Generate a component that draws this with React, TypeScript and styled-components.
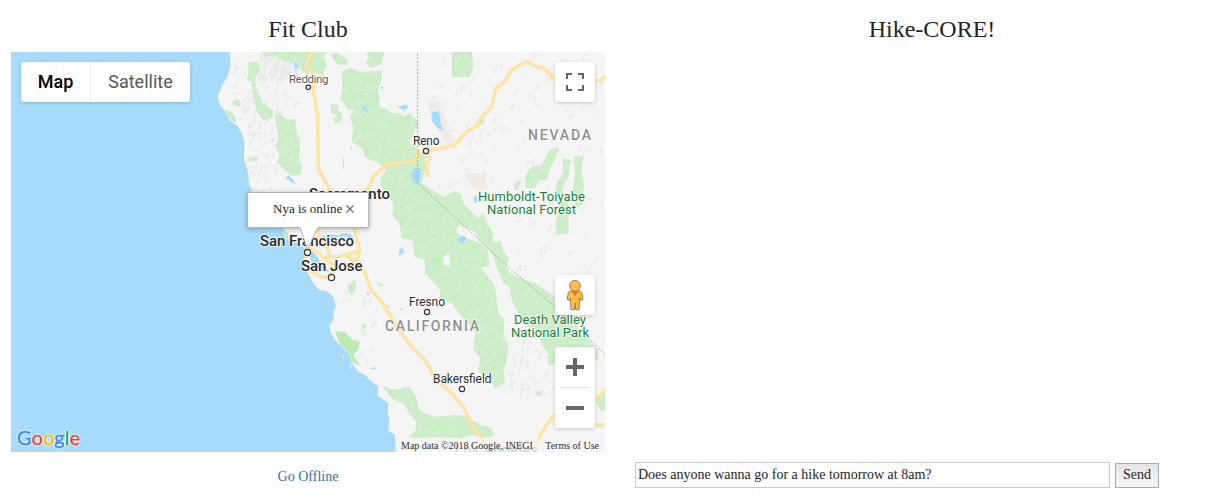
import React from 'react';
import styled, { createGlobalStyle } from 'styled-components';

const GlobalStyle = createGlobalStyle`
  * { box-sizing: border-box; }
  body {
    margin: 0;
    background: #fff;
    color: #212529;
    font-family: "Liberation Serif", "Times New Roman", serif;
    font-size: 14px;
    overflow: hidden;
  }
`;

const Page = styled.main`
  display: flex;
  gap: 30px;
  height: 502px;
  padding-left: 11px;
`;

const Column = styled.section`
  display: flex;
  flex-direction: column;
  width: 594px;
  flex: none;
`;

const Title = styled.h1`
  margin: 0;
  height: 52px;
  padding-top: 15px;
  font-size: 24px;
  line-height: 28px;
  font-weight: 400;
  text-align: center;
`;

const MapFrame = styled.div`
  position: relative;
  height: 400px;
  overflow: hidden;
  background: #a6dbfb;
  font-family: Roboto, Arial, sans-serif;
`;

const MapCanvas = styled.svg`
  display: block;
  width: 594px;
  height: 400px;
`;

const TypeSwitch = styled.div`
  position: absolute;
  top: 10px;
  left: 10px;
  display: flex;
  height: 40px;
  border-radius: 2px;
  background: #fff;
  box-shadow: 0 1px 4px -1px rgba(0, 0, 0, 0.3);
`;

const TypeButton = styled.button<{ $active?: boolean; $width: number }>`
  width: ${(p) => p.$width}px;
  padding: 0;
  border: 0;
  border-left: ${(p) => (p.$active ? '0' : '1px solid #ebebeb')};
  background: transparent;
  color: ${(p) => (p.$active ? '#000' : '#565656')};
  font: ${(p) => (p.$active ? 500 : 400)} 18px/40px Roboto, Arial, sans-serif;
`;

const ControlStack = styled.div<{ $top: number; $height: number }>`
  position: absolute;
  right: 10px;
  top: ${(p) => p.$top}px;
  display: flex;
  flex-direction: column;
  align-items: center;
  width: 40px;
  height: ${(p) => p.$height}px;
  border-radius: 2px;
  background: #fff;
  box-shadow: 0 1px 4px -1px rgba(0, 0, 0, 0.3);
`;

const ControlButton = styled.button`
  display: grid;
  place-items: center;
  width: 40px;
  height: 40px;
  padding: 0;
  border: 0;
  background: transparent;
`;

const Divider = styled.div`
  width: 30px;
  height: 1px;
  background: #e6e6e6;
`;

const Balloon = styled.div`
  position: absolute;
  left: 236px;
  top: 140px;
  display: flex;
  align-items: center;
  gap: 4px;
  width: 122px;
  height: 36px;
  padding: 0 0 2px 25px;
  border: 1px solid #b5b5b5;
  border-radius: 2px;
  background: #fff;
  box-shadow: 0 1px 5px rgba(0, 0, 0, 0.3);
  font: 13px/16px "Liberation Serif", serif;
  white-space: nowrap;
`;

const BalloonTail = styled.svg`
  position: absolute;
  left: 50px;
  top: 33px;
`;

const Attribution = styled.div`
  position: absolute;
  right: 0;
  bottom: 0;
  display: flex;
  justify-content: space-between;
  width: 209px;
  height: 13px;
  padding: 0 6px 0 5px;
  background: rgba(245, 245, 245, 0.7);
  color: #333;
  font: 10px/13px "Liberation Serif", serif;
  white-space: nowrap;
`;

const GoogleMark = styled.svg`
  position: absolute;
  left: 3px;
  bottom: 0;
  filter: drop-shadow(0 0 1px rgba(255, 255, 255, 0.8)) drop-shadow(0 0 1px rgba(255, 255, 255, 0.6));
`;

const StatusLink = styled.a`
  margin-top: 16px;
  color: #2f72ad;
  line-height: 18px;
  text-align: center;
`;

const Composer = styled.form`
  display: flex;
  align-items: flex-end;
  gap: 5px;
  margin-top: 410px;
`;

const MessageInput = styled.input`
  width: 475px;
  height: 26px;
  padding: 0 2px 1px;
  border: 1px solid #c8c8c8;
  background: #fff;
  color: #212529;
  font: 14px "Liberation Serif", serif;
`;

const SendButton = styled.button`
  width: 44px;
  height: 25px;
  padding: 0 0 2px;
  border: 1px solid #adadad;
  background: linear-gradient(#e4e4e4, #f6f6f6);
  color: #212529;
  font: 14px "Liberation Serif", serif;
`;

const LAND =
  'M75 0 76 50 67 80 50 110 37 140 45 165 60 183 73 210 95 225 108 245 118 275 117 330 124 350 130 370 132 405 150 430 205 480 235 530 236 556 252 572 285 580 300 597 300 640 310 672 324 698 340 720 362 722 385 740 393 770 385 790 387 808 372 825 378 850 390 870 410 890 430 910 445 945 460 965 480 975 495 990 520 1010 517 1035 550 1060 548 1090 553 1110 550 1142 570 1154 572 1210 1210 1210 1210 0Z';

const FORESTS = [
  'M163 0 180 22 205 15 240 36 262 38 272 26 280 55 302 70 330 68 352 78 365 45 355 20 370 0Z',
  'M375 12 395 8 430 30 425 46 395 42Z',
  'M482 0 540 0 530 40 500 55 482 40 492 22Z',
  'M130 38 158 35 165 60 150 85 155 120 175 160 205 182 203 200 175 212 155 180 143 130 140 95 125 92 130 65Z',
  'M208 195 228 192 240 207 272 208 274 245 285 270 282 330 290 345 288 372 262 378 240 360 218 340 222 310 210 290 222 270 214 230Z',
  'M85 152 102 150 110 163 100 170 82 162Z',
  'M55 180 75 182 92 200 92 218 72 205Z',
  'M124 328 140 320 160 324 158 334 128 335Z',
  'M410 65 438 53 460 65 530 62 530 90 518 120 525 145 522 168 490 178 455 182 430 178 408 150 412 105Z',
  'M378 162 400 165 398 180 412 192 412 210 390 222 388 205 400 195 378 190Z',
  'M488 180 520 168 545 178 560 190 582 190 610 205 630 240 622 262 610 275 640 300 660 312 660 360 650 400 690 425 715 440 750 425 770 435 775 460 800 485 820 505 835 490 850 525 865 550 862 575 890 575 893 600 912 625 905 650 915 670 945 685 990 700 1050 740 1080 800 1120 850 1150 870 1180 900 1180 930 1140 928 1100 905 1050 920 1048 945 1030 945 1030 910 1010 885 1000 840 970 830 940 790 920 750 915 712 895 700 875 650 865 620 850 595 820 565 810 545 760 525 753 545 770 560 830 580 850 600 852 650 825 650 850 680 870 710 880 790 898 810 895 870 910 880 905 930 895 960 900 1000 870 1015 850 980 820 965 825 920 805 900 812 850 800 830 770 800 740 760 705 745 705 720 680 690 660 670 660 630 630 620 622 570 590 565 583 520 562 495 565 460 545 430 525 405 530 380 545 360 520 340 485 325 470 295 440 275 445 235 435 200 445 185 470 175Z',
  'M740 0 800 0 805 55 800 65 795 80 740 82Z',
  'M600 198 615 188 640 218 638 240 620 232Z',
  'M1035 297 1062 293 1050 330 1035 355 1025 390 1005 390 990 415 962 415 960 380 980 350 1010 345Z',
  'M1073 325 1098 330 1090 380 1075 410 1070 440 1045 440 1055 400 1075 370Z',
  'M1105 318 1135 318 1130 370 1138 410 1125 450 1100 450 1105 420 1110 370Z',
  'M1060 450 1090 455 1095 480 1090 500 1092 550 1052 555 1052 515 1060 490Z',
  'M1110 450 1145 430 1130 465 1110 475Z',
  'M935 395 948 390 940 420 925 420Z',
  'M820 212 838 205 838 218 822 230Z',
  'M428 705 450 690 455 710 440 735 430 725Z',
  'M515 695 535 705 525 712Z',
  'M470 820 485 825 478 838Z',
  'M535 768 558 765 545 780Z',
  'M530 1006 560 1018 585 1018 600 1010 615 1012 635 1045 640 1075 660 1090 690 1100 755 1095 775 1097 790 1105 830 1125 860 1135 870 1155 850 1163 800 1155 770 1165 700 1162 640 1163 610 1160 630 1145 635 1115 610 1085 600 1065 560 1045Z',
  'M993 1025 1010 1022 1012 1038 993 1036Z',
  'M1170 1050 1210 1020 1210 1085 1185 1080Z',
  'M860 985 885 975 885 990 870 1015Z',
];

const COASTAL_PARKS = [
  'M390 843 420 846 440 868 464 875 462 895 445 915 465 945 445 940 430 905 405 885Z',
  'M233 537 248 548 252 570 240 560Z',
];

const WATER = [
  'M268 30 278 45 276 60 266 48Z',
  'M470 165 480 172 484 163 490 188 475 180Z',
  'M576 172 608 163 608 176 598 176 604 190 592 178Z',
  'M528 108 536 112 530 120Z',
  'M680 187 700 183 706 200 706 218 717 242 702 237 682 215Z',
  'M630 353 648 356 647 385 638 405 625 395 618 372Z',
  'M242 385 250 375 275 402 262 398Z',
  'M190 266 208 270 205 273Z',
  'M415 320 417 325 417 362 415 350Z',
  'M436 285 441 297 437 300Z',
  'M480 312 486 322 481 322Z',
  'M806 440 815 436 817 456 808 460Z',
  'M755 570 775 556 785 565 775 580Z',
  'M583 600 592 590 598 605 582 618Z',
  'M484 725 492 728 490 740Z',
  'M580 770 597 780 588 780Z',
  'M495 955 512 952 514 956 500 957Z',
  'M318 600 338 620 345 635 366 655 372 668 355 662 335 648 320 635 312 615Z',
  'M350 555 370 562 380 553 400 556 415 550 435 552 445 560 435 570 425 560 400 560 385 568 360 568Z',
];

const MAJOR_ROADS = [
  'M325 0 302 44 325 74 325 125 337 190 340 355 378 425 420 455 442 510 455 565 464 600 455 635 465 650 480 670 495 715 530 755 558 800 580 840 625 895 660 930 690 985 735 1025 775 1070 800 1125 830 1165 845 1210',
  'M430 450 490 415 508 375 548 342 620 335 637 322 637 308 660 305 690 298 747 286 778 250 818 225 825 205 860 170 872 115 900 95 918 60 965 34 990 48 1015 53 1052 90',
  'M1165 90 1187 91 1210 72',
  'M660 305 668 318 675 325 664 342 665 365 670 376',
  'M308 595 330 600 355 622 400 620 440 610 460 605',
  'M355 622 385 645 370 682 345 680 315 663 300 640 303 613',
  'M338 530 340 560 365 590 375 620',
  'M420 612 455 640',
  'M985 1200 1020 1130 1050 1095 1080 1100 1130 1060 1175 1045 1210 1010',
  'M1120 1125 1210 1125',
];

// Deterministic relief marks so the terrain looks the same on every render.
function reliefMarks(count: number, seed: number, area: [number, number, number, number]): string {
  let s = seed;
  const next = () => {
    s = (s * 16807) % 2147483647;
    return s / 2147483647;
  };
  const [x0, y0, w, h] = area;
  let d = '';
  for (let i = 0; i < count; i += 1) {
    const x = x0 + next() * w;
    const y = y0 + next() * h;
    const dx = 1 + next() * 9;
    const dy = 6 + next() * 14;
    const bend = (next() - 0.5) * 8;
    d += `M${x.toFixed(0)} ${y.toFixed(0)}q${bend.toFixed(0)} ${(-dy / 2).toFixed(0)} ${dx.toFixed(0)} ${(-dy).toFixed(0)}`;
  }
  return d;
}

const FOREST_DARK = reliefMarks(2200, 77, [60, 0, 1150, 1200]);
const FOREST_LIGHT = reliefMarks(1700, 4021, [60, 0, 1150, 1200]);
const HILLS = [
  reliefMarks(60, 31, [85, 60, 190, 160]),
  reliefMarks(110, 67, [165, 20, 110, 80]),
  reliefMarks(55, 913, [130, 210, 90, 240]),
  reliefMarks(110, 557, [680, 20, 510, 480]),
  reliefMarks(20, 887, [900, 480, 280, 250]),
  reliefMarks(50, 199, [900, 830, 160, 220]),
  reliefMarks(22, 271, [400, 730, 110, 230]),
].join('');

interface Place {
  name: string;
  x: number;
  y: number;
  w: number;
  size: number;
  color?: string;
  weight?: number;
}

const PLACES: Place[] = [
  { name: 'Redding', x: 289, y: 83, w: 39.5, size: 11.5, color: '#5c5c5c' },
  { name: 'Reno', x: 413, y: 145, w: 26.5, size: 12 },
  { name: 'Sacramento', x: 309, y: 199, w: 81, size: 15, weight: 500 },
  { name: 'San Francisco', x: 260, y: 246, w: 94, size: 15, weight: 500 },
  { name: 'San Jose', x: 301, y: 271, w: 61.5, size: 15, weight: 500 },
  { name: 'Fresno', x: 409, y: 306, w: 36, size: 12 },
  { name: 'Bakersfield', x: 433, y: 383, w: 58.5, size: 12 },
  { name: 'CALIFORNIA', x: 385, y: 331, w: 94, size: 14, color: '#8f8f8f', weight: 500 },
  { name: 'NEVADA', x: 528, y: 140, w: 63, size: 14, color: '#8f8f8f', weight: 500 },
  { name: 'Humboldt-Toiyabe', x: 478, y: 200.5, w: 107, size: 13, color: '#178038' },
  { name: 'National Forest', x: 487, y: 213.5, w: 89, size: 13, color: '#178038' },
  { name: 'Death Valley', x: 514, y: 323.5, w: 72, size: 13, color: '#178038' },
  { name: 'National Park', x: 511, y: 336.5, w: 78, size: 13, color: '#178038' },
  { name: 'Los Angeles', x: 455, y: 455, w: 83, size: 14.5, color: '#858585', weight: 500 },
];

const TOWNS: [number, number, number][] = [
  [308.3, 87.3, 2.2],
  [426, 151, 2.6],
  [307.5, 252.5, 3.1],
  [331.5, 277.5, 3.1],
  [427, 312, 2.6],
  [462, 389, 2.6],
];

function MapDrawing() {
  return (
    <MapCanvas viewBox="11 52 594 400" aria-label="Map of California">
      <defs>
        <clipPath id="forest">
          {FORESTS.map((d) => (
            <path key={d} d={d} />
          ))}
        </clipPath>
      </defs>
      <g transform="translate(205 50) scale(0.33333)">
        <path d={LAND} fill="#f5f5f5" />
        <path d={HILLS} fill="none" stroke="#e9e9ea" strokeWidth="4" strokeLinecap="round" />
        <path
          d="M668 152 705 155 712 185 738 240 745 280 725 285 700 240 680 215ZM775 368 845 372 845 415 820 425 795 400Z"
          fill="#efebe9"
        />
        {FORESTS.map((d) => (
          <path key={d} d={d} fill="#cdeec9" />
        ))}
        <g clipPath="url(#forest)" fill="none">
          <path d={FOREST_DARK} stroke="#c4e7c0" strokeWidth="3" />
          <path d={FOREST_LIGHT} stroke="#d3f1cf" strokeWidth="4" />
        </g>
        {COASTAL_PARKS.map((d) => (
          <path key={d} d={d} fill="#bde9b5" />
        ))}
        <path d="M680 630 700 620 710 635 690 645Z" fill="#bdecb4" />
        <path d="M715 620 732 610 736 650 716 645Z" fill="#f5f5f5" />
        {WATER.map((d) => (
          <path key={d} d={d} fill="#a6dbfb" />
        ))}
        <g fill="none" strokeLinejoin="round" strokeLinecap="round">
          {MAJOR_ROADS.map((d) => (
            <path key={d} d={d} stroke="#fbdf9c" strokeWidth="10" />
          ))}
          {MAJOR_ROADS.map((d) => (
            <path key={d} d={d} stroke="#ffe6a6" strokeWidth="7" />
          ))}
        </g>
        <path
          d="M638 0V398L920 660 1050 770 1210 922"
          fill="none"
          stroke="#a9a9a9"
          strokeWidth="3"
          strokeDasharray="6 5"
        />
      </g>
      {TOWNS.map(([x, y, r]) => (
        <circle key={x} cx={x} cy={y} r={r} fill="#fff" stroke="#333" strokeWidth="1.2" />
      ))}
      {PLACES.map((p) => (
        <text
          key={p.name}
          x={p.x}
          y={p.y}
          textLength={p.w}
          fontSize={p.size}
          fontWeight={p.weight ?? 400}
          fill={p.color ?? '#2b2b2b'}
          stroke="#fff"
          strokeOpacity="0.75"
          strokeWidth="2"
          strokeLinejoin="round"
          paintOrder="stroke"
        >
          {p.name}
        </text>
      ))}
    </MapCanvas>
  );
}

function Pegman() {
  return (
    <svg width="18" height="32" viewBox="0 0 18 32">
      <path
        d="M4.500 12h9c1.400 0 2 .8 2.200 2l1.300 6.500-2.400.9-1-2.400-.5 11.700H9.700L9 24l-.7 6.700H4.900L4.400 19l-1 2.400-2.400-.9L2.300 14c.2-1.200.8-2 2.200-2Z"
        fill="#fdbb3f"
        stroke="#8b7a5c"
        strokeWidth="0.9"
      />
      <path d="M5.500 12h7L9 17.500Z" fill="#e5762b" />
      <circle cx="9" cy="6.800" r="5.400" fill="#fdbb3f" stroke="#8b7a5c" strokeWidth="0.9" />
    </svg>
  );
}

export default function App() {
  return (
    <>
      <GlobalStyle />
      <Page>
        <Column>
          <Title>Fit Club</Title>
          <MapFrame>
            <MapDrawing />
            <TypeSwitch>
              <TypeButton $active $width={69}>Map</TypeButton>
              <TypeButton $width={100}>Satellite</TypeButton>
            </TypeSwitch>
            <ControlStack $top={10} $height={40}>
              <ControlButton aria-label="Fullscreen">
                <svg width="18" height="18" viewBox="0 0 18 18">
                  <path d="M1 6V1h5M12 1h5v5M17 12v5h-5M6 17H1v-5" fill="none" stroke="#666" strokeWidth="2" />
                </svg>
              </ControlButton>
            </ControlStack>
            <ControlStack $top={223} $height={40}>
              <ControlButton aria-label="Street view">
                <Pegman />
              </ControlButton>
            </ControlStack>
            <ControlStack $top={295} $height={81}>
              <ControlButton aria-label="Zoom in">
                <svg width="18" height="18" viewBox="0 0 18 18">
                  <path d="M7 0h4v7h7v4h-7v7H7v-7H0V7h7Z" fill="#666" />
                </svg>
              </ControlButton>
              <Divider />
              <ControlButton aria-label="Zoom out">
                <svg width="18" height="18" viewBox="0 0 18 18">
                  <path d="M0 7h18v4H0Z" fill="#666" />
                </svg>
              </ControlButton>
            </ControlStack>
            <Balloon>
              <BalloonTail width="22" height="26" viewBox="0 0 22 26">
                <path d="M2 1 9.500 23 20 1" fill="#fff" stroke="#b5b5b5" />
                <path d="M2 0h18v2H2Z" fill="#fff" />
              </BalloonTail>
              <span>Nya is online</span>
              <svg width="8" height="8" viewBox="0 0 8 8">
                <path d="M.5.5l7 7M7.500.5l-7 7" stroke="#666" strokeWidth="1.100" />
              </svg>
            </Balloon>
            <GoogleMark width="72" height="28" viewBox="0 0 72 28">
              <text x="3" y="21" textLength="63" fontFamily="Lato, sans-serif" fontSize="20" strokeWidth="0.300">
                <tspan fill="#4285f4" stroke="#4285f4">G</tspan>
                <tspan fill="#ea4335" stroke="#ea4335">o</tspan>
                <tspan fill="#fbbc05" stroke="#fbbc05">o</tspan>
                <tspan fill="#4285f4" stroke="#4285f4">g</tspan>
                <tspan fill="#34a853" stroke="#34a853">l</tspan>
                <tspan fill="#ea4335" stroke="#ea4335">e</tspan>
              </text>
            </GoogleMark>
            <Attribution>
              <span>Map data ©2018 Google, INEGI</span>
              <span>Terms of Use</span>
            </Attribution>
          </MapFrame>
          <StatusLink>Go Offline</StatusLink>
        </Column>
        <Column>
          <Title>Hike-CORE!</Title>
          <Composer>
            <MessageInput defaultValue="Does anyone wanna go for a hike tomorrow at 8am?" />
            <SendButton type="button">Send</SendButton>
          </Composer>
        </Column>
      </Page>
    </>
  );
}
